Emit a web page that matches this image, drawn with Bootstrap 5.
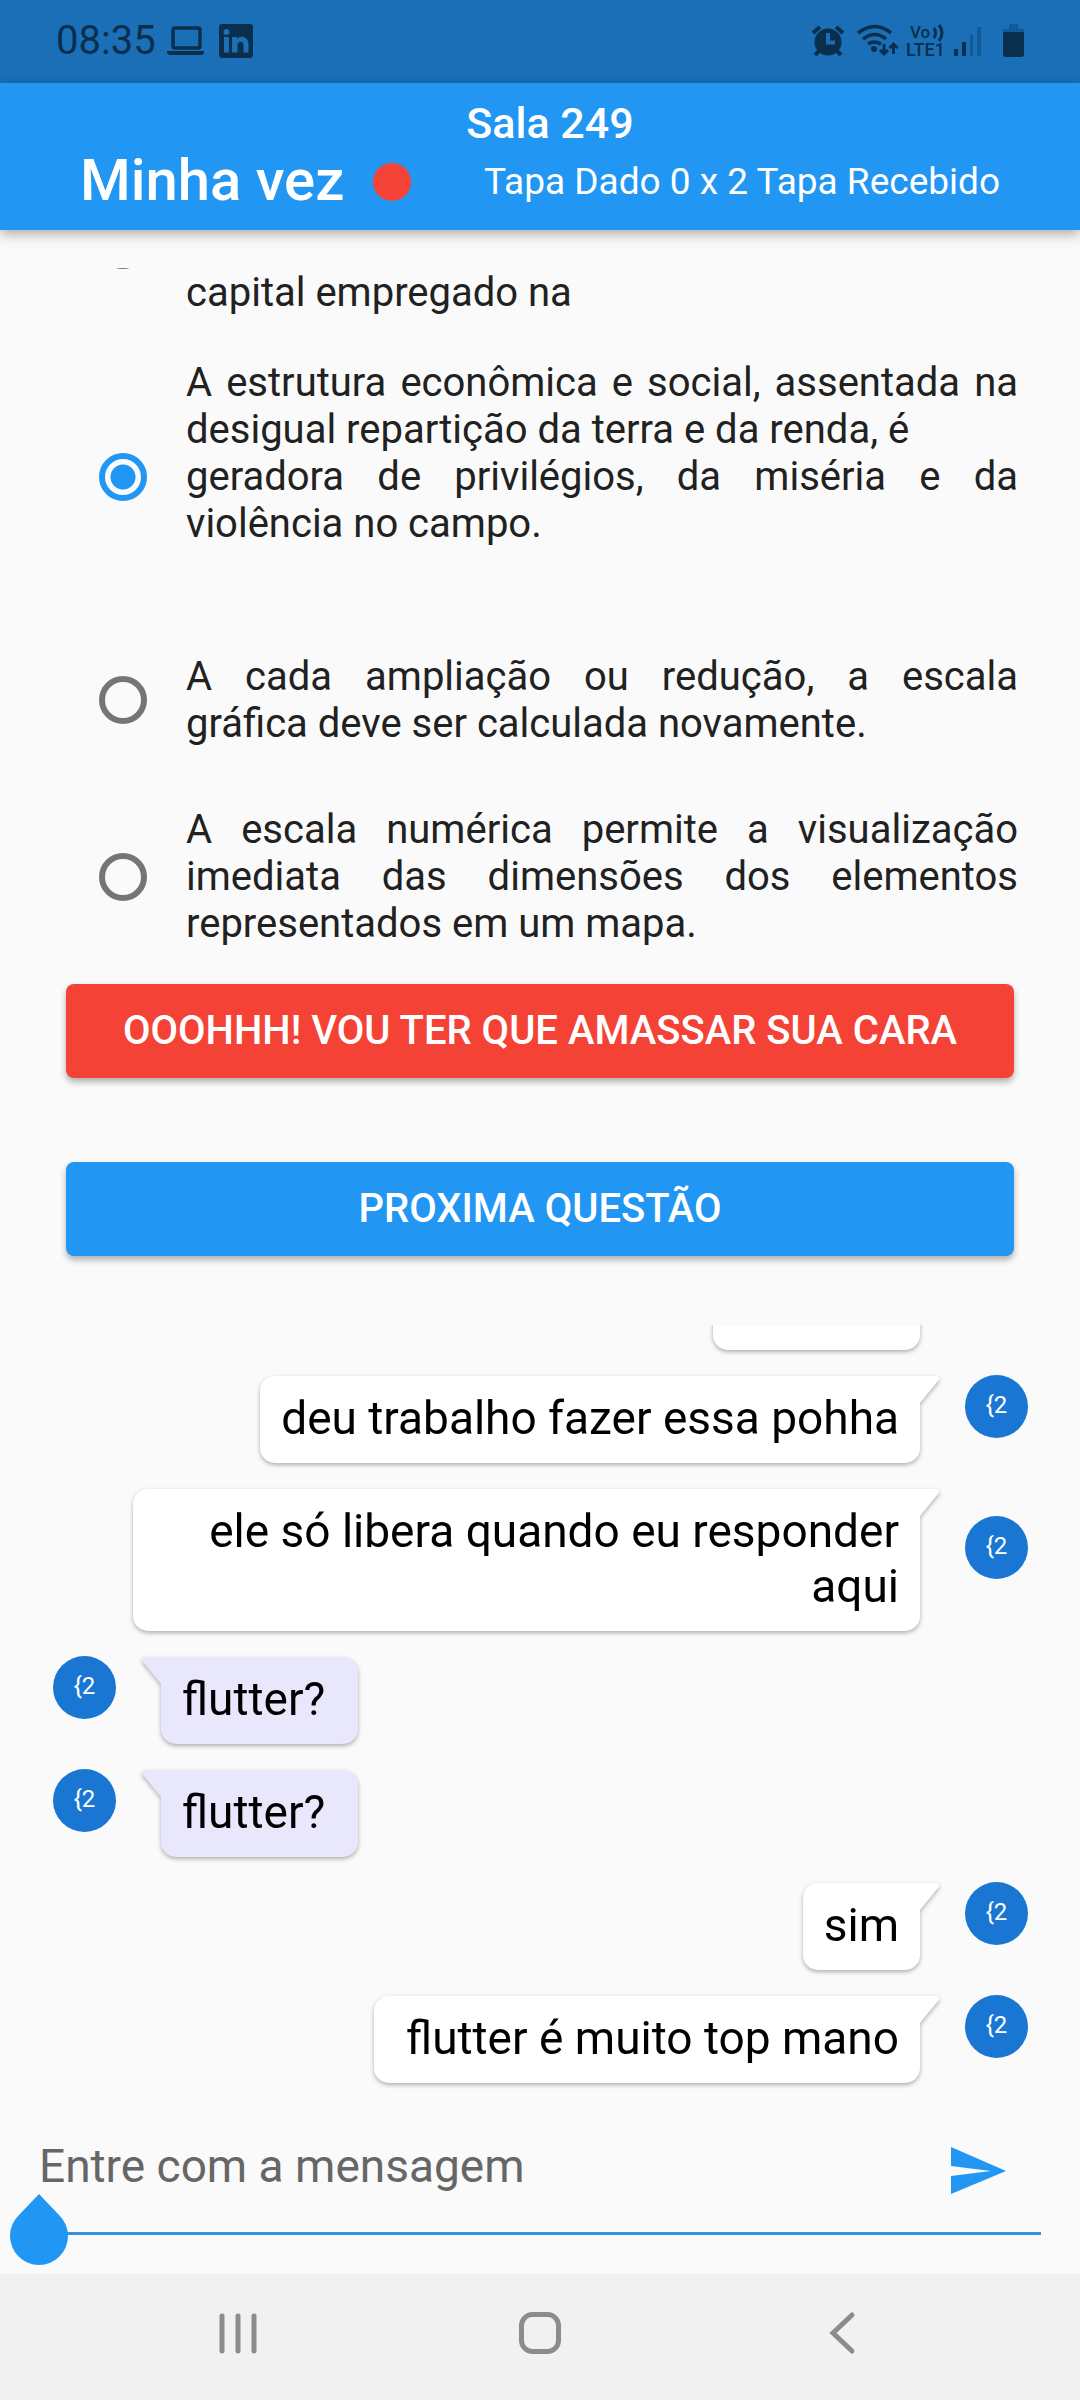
<!DOCTYPE html>
<html lang="pt-BR">
<head>
<meta charset="utf-8">
<meta name="viewport" content="width=device-width, initial-scale=1">
<title>Sala 249</title>
<link href="https://cdn.jsdelivr.net/npm/bootstrap@5.3.0/dist/css/bootstrap.min.css" rel="stylesheet">
<style>
  body { font-family: Roboto, "Noto Sans", sans-serif; background: #fafafa; color: #212121; font-size: 40px; line-height: 47px; }
  .status-strip { background: #1a6fb6; height: 83px; padding: 0 56px 2px; color: #0a2f4d; }
  .status-strip svg { display: block; }
  .app-head { background: #2196f3; color: #fff; height: 147px; padding: 17px 80px 12px; box-shadow: 0 4px 12px rgba(0,0,0,.32); z-index: 2; }
  .room-title { font-size: 43px; line-height: 46px; font-weight: 500; margin: 0; padding-left: 20px; }
  .turn-text { font-size: 58px; line-height: 68px; font-weight: 500; }
  .turn-dot { width: 38px; height: 38px; background: #f44336; margin-left: 29px; }
  .score-text { font-size: 37px; line-height: 44px; }

  .quiz-list { margin-top: 38px; height: 686px; overflow: hidden; padding: 0 62px 0 66px; }
  .quiz-row { display: flex; align-items: center; text-align: justify; margin-bottom: 59px; }
  .quiz-row label { flex: 1; }
  .quiz-row.is-cut { height: 48px; align-items: flex-end; overflow: hidden; margin-bottom: 43px; }
  .quiz-row .form-check-input { flex: none; width: 48px; height: 48px; margin: 0 39px 0 33px; border: 6px solid #757575; background: transparent; box-shadow: none; }
  .quiz-row .form-check-input:checked { border-color: #2196f3; background: radial-gradient(circle, #2196f3 12px, transparent 13px); }
  .quiz-row.is-cut .form-check-input { align-self: flex-start; margin-top: -47px; }
  .has-blank { padding-bottom: 47px; }

  .action-set { padding: 30px 66px 0; gap: 84px; }
  .btn-raised { height: 94px; font-size: 40px; line-height: 46px; font-weight: 500; color: #fff; border: 0; border-radius: 8px; box-shadow: 0 4px 6px rgba(0,0,0,.3); }
  .btn-slap { background: #f44336; }
  .btn-next { background: #2196f3; }

  .chat-log { margin-top: 69px; padding: 0 52px 10px 53px; height: 768px; overflow: hidden; color: #000; font-size: 46px; line-height: 55px; justify-content: flex-end; }
  .chat-row { display: flex; align-items: center; flex: none; }
  .chat-row.mine { justify-content: flex-end; }
  .talk { position: relative; margin-top: 26px; padding: 15px 21px 17px; border-radius: 15px; background: #fff; filter: drop-shadow(0 2px 2px rgba(0,0,0,.3)); }
  .talk::after { content: ""; position: absolute; top: 0; width: 34px; height: 27px; background: inherit; }
  .mine .talk { margin-right: 45px; margin-left: 80px; text-align: right; border-top-right-radius: 0; }
  .mine .talk::after { right: -19px; clip-path: polygon(0 0, 96% 0, 100% 8%, 100% 14%, 44% 100%, 0 100%); }
  .theirs .talk { margin-left: 45px; background: #e9e7fb; border-top-left-radius: 0; }
  .theirs .talk::after { left: -19px; clip-path: polygon(100% 0, 4% 0, 0 8%, 0 14%, 56% 100%, 100% 100%); }
  .talk span { position: relative; z-index: 1; }
  .talk-blank { width: 207px; height: 87px; }
  .mine .talk-blank { margin-right: 108px; }
  .who { flex: none; width: 63px; height: 63px; background: #1976d2; color: #fff; font-size: 24px; line-height: 28px; padding-bottom: 3px; }

  .compose { position: relative; margin: 0 39px; height: 142px; border-bottom: 3px solid #3492de; padding: 8px 26px 0 0; }
  .compose .form-control { border: 0; border-radius: 0; background: transparent; box-shadow: none; padding: 0; font-size: 46px; line-height: 55px; color: #000; }
  .compose .form-control::placeholder { color: #666; opacity: 1; }
  .btn-send { padding: 8px 0 0; border: 0; line-height: 0; }
  .caret-drop { position: absolute; left: -29px; bottom: -33px; }
  .sys-nav { margin-top: 39px; background: #f1f1f1; height: 126px; padding: 0 87px 8px; }
  .sys-nav .btn { padding: 0; border: 0; line-height: 0; }
</style>
</head>
<body>
<div class="status-strip d-flex align-items-center justify-content-between">
  <div class="d-flex align-items-center">
    <span>08:35</span>
    <svg class="ms-2" width="100" height="40" viewBox="0 0 100 40" aria-hidden="true">
      <rect x="9" y="7" width="27" height="20" rx="2" fill="none" stroke="#0a2f4d" stroke-width="3.500"/>
      <path d="M3 30h37v1q0 3-3 3H6q-3 0-3-3z" fill="#0a2f4d"/>
      <rect x="55" y="3" width="34" height="34" rx="3" fill="#0a2f4d"/>
      <g fill="#1a6fb6"><circle cx="62.500" cy="11" r="3"/><path d="M60 16h5v15.500h-5zM68 16h5v2c2-3.500 11.500-3.500 11.500 5v8.500h-5V24c0-4.500-6-4.500-6 0v7.500H68z"/></g>
    </svg>
  </div>
  <svg width="216" height="40" viewBox="808 20 216 40" aria-hidden="true">
    <g fill="none" stroke="#0a2f4d" stroke-width="4">
      <path d="M813 32l7-6M843 32l-7-6M820 49l-5 5M836 49l5 5"/>
      <g stroke-width="3.500"><path d="M858 32q17-13 33 0M863 38q12-9 23 0M868 43q6-4 13 0"/></g>
      <path stroke-width="3" d="M884 43v10m-4-4 4 4 4-4M893.500 53V43m-4 4 4-4 4 4M934 27q3 5 0 10M939 24q6 8 0 16"/>
    </g>
    <circle cx="828" cy="41" r="13.500" fill="#0a2f4d"/>
    <path d="M828 32v9.500h7" fill="none" stroke="#1a6fb6" stroke-width="4"/>
    <circle cx="874" cy="48" r="3" fill="#0a2f4d"/>
    <g fill="#0a2f4d" font-family="Roboto, sans-serif" font-weight="500"><text x="910" y="37" font-size="17">Vo</text><text x="906" y="55" font-size="18">LTE1</text></g>
    <g fill="#0a2f4d"><rect x="954" y="48" width="4" height="7" rx="1"/><rect x="962" y="41" width="4" height="14" rx="1"/></g>
    <g fill="#125a96"><rect x="970" y="33" width="3" height="22" rx="1"/><rect x="977" y="26" width="4" height="29" rx="1"/><path d="M1009 23h9v5h6v5h-21v-5h6z"/></g>
    <path d="M1003 31h21v22q0 3-3 3h-15q-3 0-3-3z" fill="#0a2f4d"/>
  </svg>
</div>
<header class="app-head position-relative">
  <h1 class="room-title text-center">Sala 249</h1>
  <div class="d-flex align-items-center justify-content-between">
    <div class="d-flex align-items-center"><span class="turn-text">Minha vez</span><span class="turn-dot rounded-circle mt-1"></span></div>
    <span class="score-text pt-1">Tapa Dado 0 x 2 Tapa Recebido</span>
  </div>
</header>
<main>
  <section class="quiz-list">
    <div class="quiz-row is-cut"><input class="form-check-input" type="radio" name="resp" id="r0"><label for="r0">capital empregado na</label></div>
    <div class="quiz-row"><input class="form-check-input" type="radio" name="resp" id="r1" checked><label class="has-blank" for="r1">A estrutura econômica e social, assentada na desigual repartição da terra e da renda, é<br>geradora de privilégios, da miséria e da violência no campo.</label></div>
    <div class="quiz-row"><input class="form-check-input" type="radio" name="resp" id="r2"><label for="r2">A cada ampliação ou redução, a escala gráfica&nbsp;deve ser calculada novamente.</label></div>
    <div class="quiz-row"><input class="form-check-input" type="radio" name="resp" id="r3"><label for="r3">A escala numérica permite a visualização imediata das dimensões dos elementos representados em um mapa.</label></div>
  </section>
  <div class="action-set d-grid">
    <button type="button" class="btn btn-raised btn-slap">OOOHHH! VOU TER QUE AMASSAR SUA CARA</button>
    <button type="button" class="btn btn-raised btn-next">PROXIMA QUESTÃO</button>
  </div>
  <section class="chat-log d-flex flex-column">
    <div class="chat-row mine"><div class="talk talk-blank"></div></div>
    <div class="chat-row mine"><div class="talk"><span>deu trabalho fazer essa pohha</span></div><div class="who rounded-circle d-flex align-items-center justify-content-center">{2</div></div>
    <div class="chat-row mine"><div class="talk"><span>ele só libera quando eu responder aqui</span></div><div class="who rounded-circle d-flex align-items-center justify-content-center">{2</div></div>
    <div class="chat-row theirs"><div class="who rounded-circle d-flex align-items-center justify-content-center">{2</div><div class="talk"><span>flutter?&nbsp;</span></div></div>
    <div class="chat-row theirs"><div class="who rounded-circle d-flex align-items-center justify-content-center">{2</div><div class="talk"><span>flutter?&nbsp;</span></div></div>
    <div class="chat-row mine"><div class="talk"><span>sim</span></div><div class="who rounded-circle d-flex align-items-center justify-content-center">{2</div></div>
    <div class="chat-row mine"><div class="talk"><span>&nbsp;flutter é muito top mano</span></div><div class="who rounded-circle d-flex align-items-center justify-content-center">{2</div></div>
  </section>
  <form class="compose d-flex align-items-center">
    <input class="form-control" type="text" placeholder="Entre com a mensagem" aria-label="Entre com a mensagem">
    <button type="button" class="btn btn-send" aria-label="Enviar"><svg width="73" height="64" viewBox="0 0 73 64"><path d="M9 8l55 24L9 55V37l40-5-40-5z" fill="#2196f3"/></svg></button>
    <svg class="caret-drop" width="58" height="71" viewBox="0 0 58 71" aria-hidden="true"><path d="M29 0L49 21A29 29 0 1 1 9 21z" fill="#2196f3"/></svg>
  </form>
</main>
<nav class="sys-nav d-flex justify-content-around align-items-center">
  <button class="btn" aria-label="Recentes"><svg width="44" height="44" viewBox="0 0 44 44"><path d="M6 5v35M22 5v35M38 5v35" stroke="#8c8c8c" stroke-width="5" stroke-linecap="round"/></svg></button>
  <button class="btn" aria-label="Início"><svg width="44" height="44" viewBox="0 0 44 44"><rect x="3.500" y="3.500" width="37" height="37" rx="11" fill="none" stroke="#8c8c8c" stroke-width="5"/></svg></button>
  <button class="btn" aria-label="Voltar"><svg width="44" height="44" viewBox="0 0 44 44"><path d="M32 4L13 22l19 18" fill="none" stroke="#8c8c8c" stroke-width="5" stroke-linecap="round"/></svg></button>
</nav>
<script src="https://cdn.jsdelivr.net/npm/bootstrap@5.3.0/dist/js/bootstrap.bundle.min.js"></script>
</body>
</html>
